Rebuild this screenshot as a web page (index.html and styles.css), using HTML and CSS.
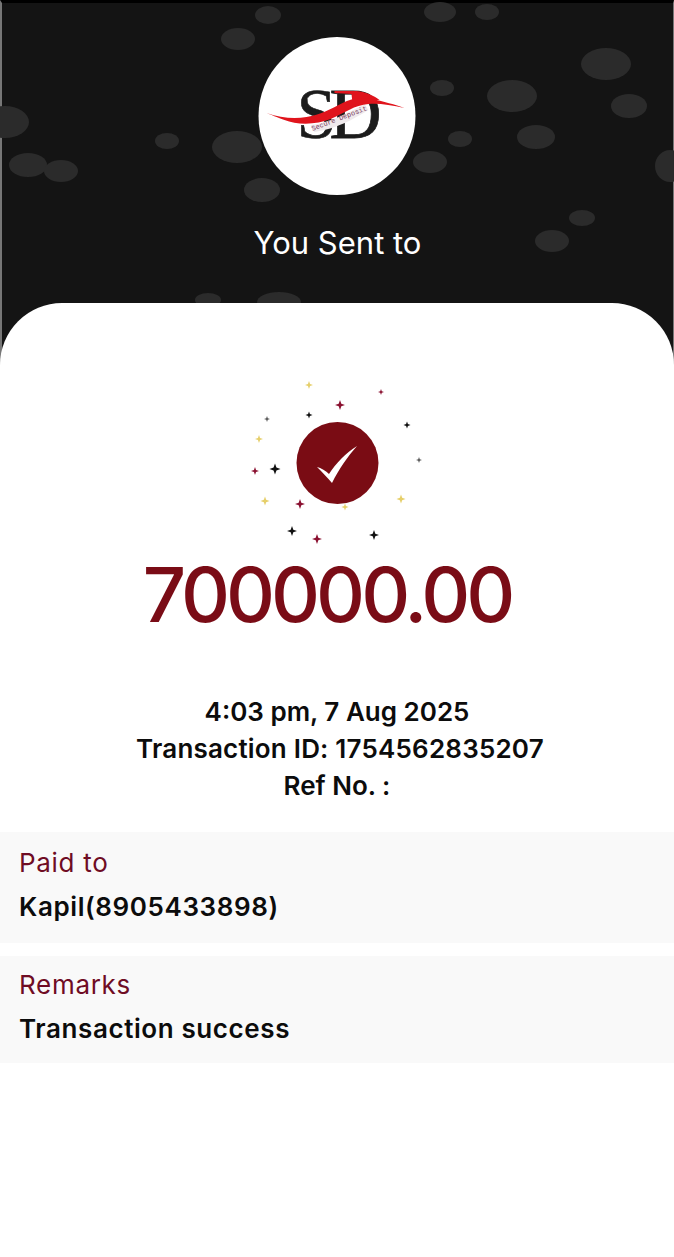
FILE: index.html
```html
<!DOCTYPE html>
<html lang="en">
<head>
    <meta charset="UTF-8">
    <meta name="viewport" content="width=device-width, initial-scale=1.0">
    <title>Payment Receipt</title>
    <link rel="stylesheet" href="styles.css">
</head>
<body>

    <div class="header">
        <svg class="bubbles" viewBox="0 0 674 365" aria-hidden="true">
            <ellipse cx="268" cy="15" rx="13" ry="9"/>
            <ellipse cx="440" cy="12" rx="16" ry="10"/>
            <ellipse cx="487" cy="12" rx="12" ry="8"/>
            <ellipse cx="238" cy="39" rx="17" ry="11"/>
            <ellipse cx="606" cy="64" rx="25" ry="16"/>
            <ellipse cx="442" cy="88" rx="12" ry="8"/>
            <ellipse cx="512" cy="96" rx="25" ry="16"/>
            <ellipse cx="629" cy="106" rx="18" ry="12"/>
            <ellipse cx="5" cy="122" rx="24" ry="16"/>
            <ellipse cx="167" cy="141" rx="12" ry="8"/>
            <ellipse cx="237" cy="147" rx="25" ry="16"/>
            <ellipse cx="460" cy="139" rx="12" ry="8"/>
            <ellipse cx="536" cy="137" rx="19" ry="12"/>
            <ellipse cx="28" cy="165" rx="19" ry="12"/>
            <ellipse cx="61" cy="171" rx="17" ry="11"/>
            <ellipse cx="430" cy="162" rx="17" ry="11"/>
            <ellipse cx="670" cy="166" rx="15" ry="16"/>
            <ellipse cx="262" cy="190" rx="18" ry="12"/>
            <ellipse cx="582" cy="218" rx="13" ry="8"/>
            <ellipse cx="552" cy="241" rx="17" ry="11"/>
            <ellipse cx="208" cy="300" rx="13" ry="7"/>
            <ellipse cx="279" cy="302" rx="22" ry="10"/>
        </svg>

        <div class="logo">
            <svg width="157" height="158" viewBox="0 0 157 158">
                <text class="logo-s" x="38" y="101">S</text>
                <text class="logo-d" x="71" y="101">D</text>
                <path class="logo-swoosh" d="M76 54H98C108 55 116 59 121 63L108 63L94 66L93 57L76 56Z"/>
                <path class="logo-band" d="M52 88C70 86 90 76 106 67L110 73C95 82 78 92 56 95Z"/>
                <path class="logo-swoosh" d="M8 76C22 81 36 82 48 80C62 78 72 72 84 66C92 62 100 60 112 62C125 64 137 68 146 71C132 68 120 66 110 67C96 68 86 76 72 82C58 88 38 88 26 83C18 80 13 78 8 76Z"/>
                <text class="logo-small" x="54" y="94" transform="rotate(-21 54 94)">Secure Deposit</text>
            </svg>
        </div>
        <h1 class="sent-title">You Sent to</h1>
    </div>

    <div class="sheet">
        <svg class="burst" width="210" height="180" viewBox="230 370 210 180">
            <defs>
                <path id="star" d="M0-5 1.3-1.3 5 0 1.3 1.3 0 5-1.3 1.3-5 0-1.3-1.3Z"/>
            </defs>
            <use href="#star" class="st-yellow" transform="translate(309 385) scale(.8)"/>
            <use href="#star" class="st-red" transform="translate(381 392) scale(.6)"/>
            <use href="#star" class="st-red" transform="translate(340 405) scale(1)"/>
            <use href="#star" class="st-black" transform="translate(309 415) scale(.7)"/>
            <use href="#star" class="st-grey" transform="translate(267 419) scale(.6)"/>
            <use href="#star" class="st-black" transform="translate(407 425) scale(.7)"/>
            <use href="#star" class="st-yellow" transform="translate(259 439) scale(.8)"/>
            <use href="#star" class="st-grey" transform="translate(419 460) scale(.6)"/>
            <use href="#star" class="st-red" transform="translate(255 471) scale(.8)"/>
            <use href="#star" class="st-black" transform="translate(275 469) scale(1.1)"/>
            <use href="#star" class="st-yellow" transform="translate(265 501) scale(.9)"/>
            <use href="#star" class="st-yellow" transform="translate(401 499) scale(.9)"/>
            <use href="#star" class="st-red" transform="translate(300 504) scale(1)"/>
            <use href="#star" class="st-yellow" transform="translate(345 507) scale(.7)"/>
            <use href="#star" class="st-black" transform="translate(292 531) scale(1)"/>
            <use href="#star" class="st-red" transform="translate(317 539) scale(1)"/>
            <use href="#star" class="st-black" transform="translate(374 535) scale(1)"/>
            <circle class="check-circle" cx="337.5" cy="463" r="41"/>
            <path class="check-mark" d="M317 467C321 468 326 471 329 474C336 463 346 453 357 446C348 456 339 469 332 483C327 477 322 472 317 467Z"/>
        </svg>

        <div class="amount">700000.00</div>

        <div class="meta">
            <div>4:03 pm, 7 Aug 2025</div>
            <div class="meta-id">Transaction ID: 1754562835207</div>
            <div>Ref No. :</div>
        </div>

        <div class="info-row paid">
            <div class="info-label">Paid to</div>
            <div class="info-value">Kapil(8905433898)</div>
        </div>
        <div class="info-row remarks">
            <div class="info-label">Remarks</div>
            <div class="info-value">Transaction success</div>
        </div>
    </div>

</body>
</html>
```

FILE: styles.css
```css
* {
    box-sizing: border-box;
}
body {
    margin: 0;
    height: 1257px;
    overflow: hidden;
    background-color: #fff;
    font-family: Inter, "Noto Sans", sans-serif;
}
.header {
    position: relative;
    height: 365px;
    padding-top: 34px;
    background-color: #141414;
    border-top: 3px solid #000;
    border-left: 2px solid #777;
    border-right: 1px solid #777;
    text-align: center;
}
.bubbles {
    position: absolute;
    top: -3px;
    left: -2px;
    width: 674px;
    height: 365px;
    fill: #2b2b2b;
}
.logo {
    position: relative;
    width: 157px;
    height: 158px;
    margin: 0 auto;
    background-color: #fff;
    border-radius: 50%;
    transform: translateX(-0.5px);
}
.logo svg {
    display: block;
}
.logo-s {
    font-family: "Liberation Serif", serif;
    font-size: 72px;
    fill: #1c1c1c;
    stroke: #1c1c1c;
    stroke-width: 0.6;
}
.logo-d {
    font-family: "Liberation Serif", serif;
    font-size: 72px;
    fill: #1c1c1c;
    stroke: #1c1c1c;
    stroke-width: 0.8;
}
.logo-band {
    fill: #f0eaec;
}
.logo-swoosh {
    fill: #e0141c;
}
.logo-small {
    font-family: "Liberation Mono", monospace;
    font-size: 7px;
    fill: #7a3a5a;
}
.sent-title {
    position: relative;
    margin: 30px 0 0;
    font-size: 31px;
    line-height: 36px;
    font-weight: 400;
    color: #fff;
}
.sheet {
    position: relative;
    margin-top: -62px;
    height: 954px;
    padding-top: 67px;
    background-color: #fff;
    border-radius: 62px 62px 0 0;
    text-align: center;
}
.burst {
    display: block;
    margin-left: 230px;
}
.st-yellow {
    fill: #e6cf6a;
}
.st-red {
    fill: #8a1030;
}
.st-black {
    fill: #111;
}
.st-grey {
    fill: #555;
}
.check-circle {
    fill: #7a0c14;
}
.check-mark {
    fill: #fff;
}
.amount {
    margin-top: -4px;
    padding-right: 20px;
    font-size: 76px;
    line-height: 96px;
    font-weight: 500;
    letter-spacing: -4px;
    color: #7a0c16;
}
.meta {
    margin-top: 51px;
    font-size: 26px;
    line-height: 37px;
    font-weight: 600;
    color: #0c0c0c;
}
.meta-id {
    padding-left: 6px;
    letter-spacing: 0.2px;
}
.info-row {
    background-color: #f9f9f9;
    text-align: left;
    font-size: 26px;
    padding-left: 19px;
    padding-right: 19px;
}
.paid {
    height: 111px;
    margin-top: 28px;
    padding-top: 11px;
}
.remarks {
    height: 107px;
    margin-top: 13px;
    padding-top: 9px;
}
.info-label {
    line-height: 40px;
    letter-spacing: 0.7px;
    color: #6f0c24;
}
.info-value {
    margin-top: 4px;
    line-height: 40px;
    font-weight: 600;
    letter-spacing: 0.6px;
    color: #0c0c0c;
}
```
